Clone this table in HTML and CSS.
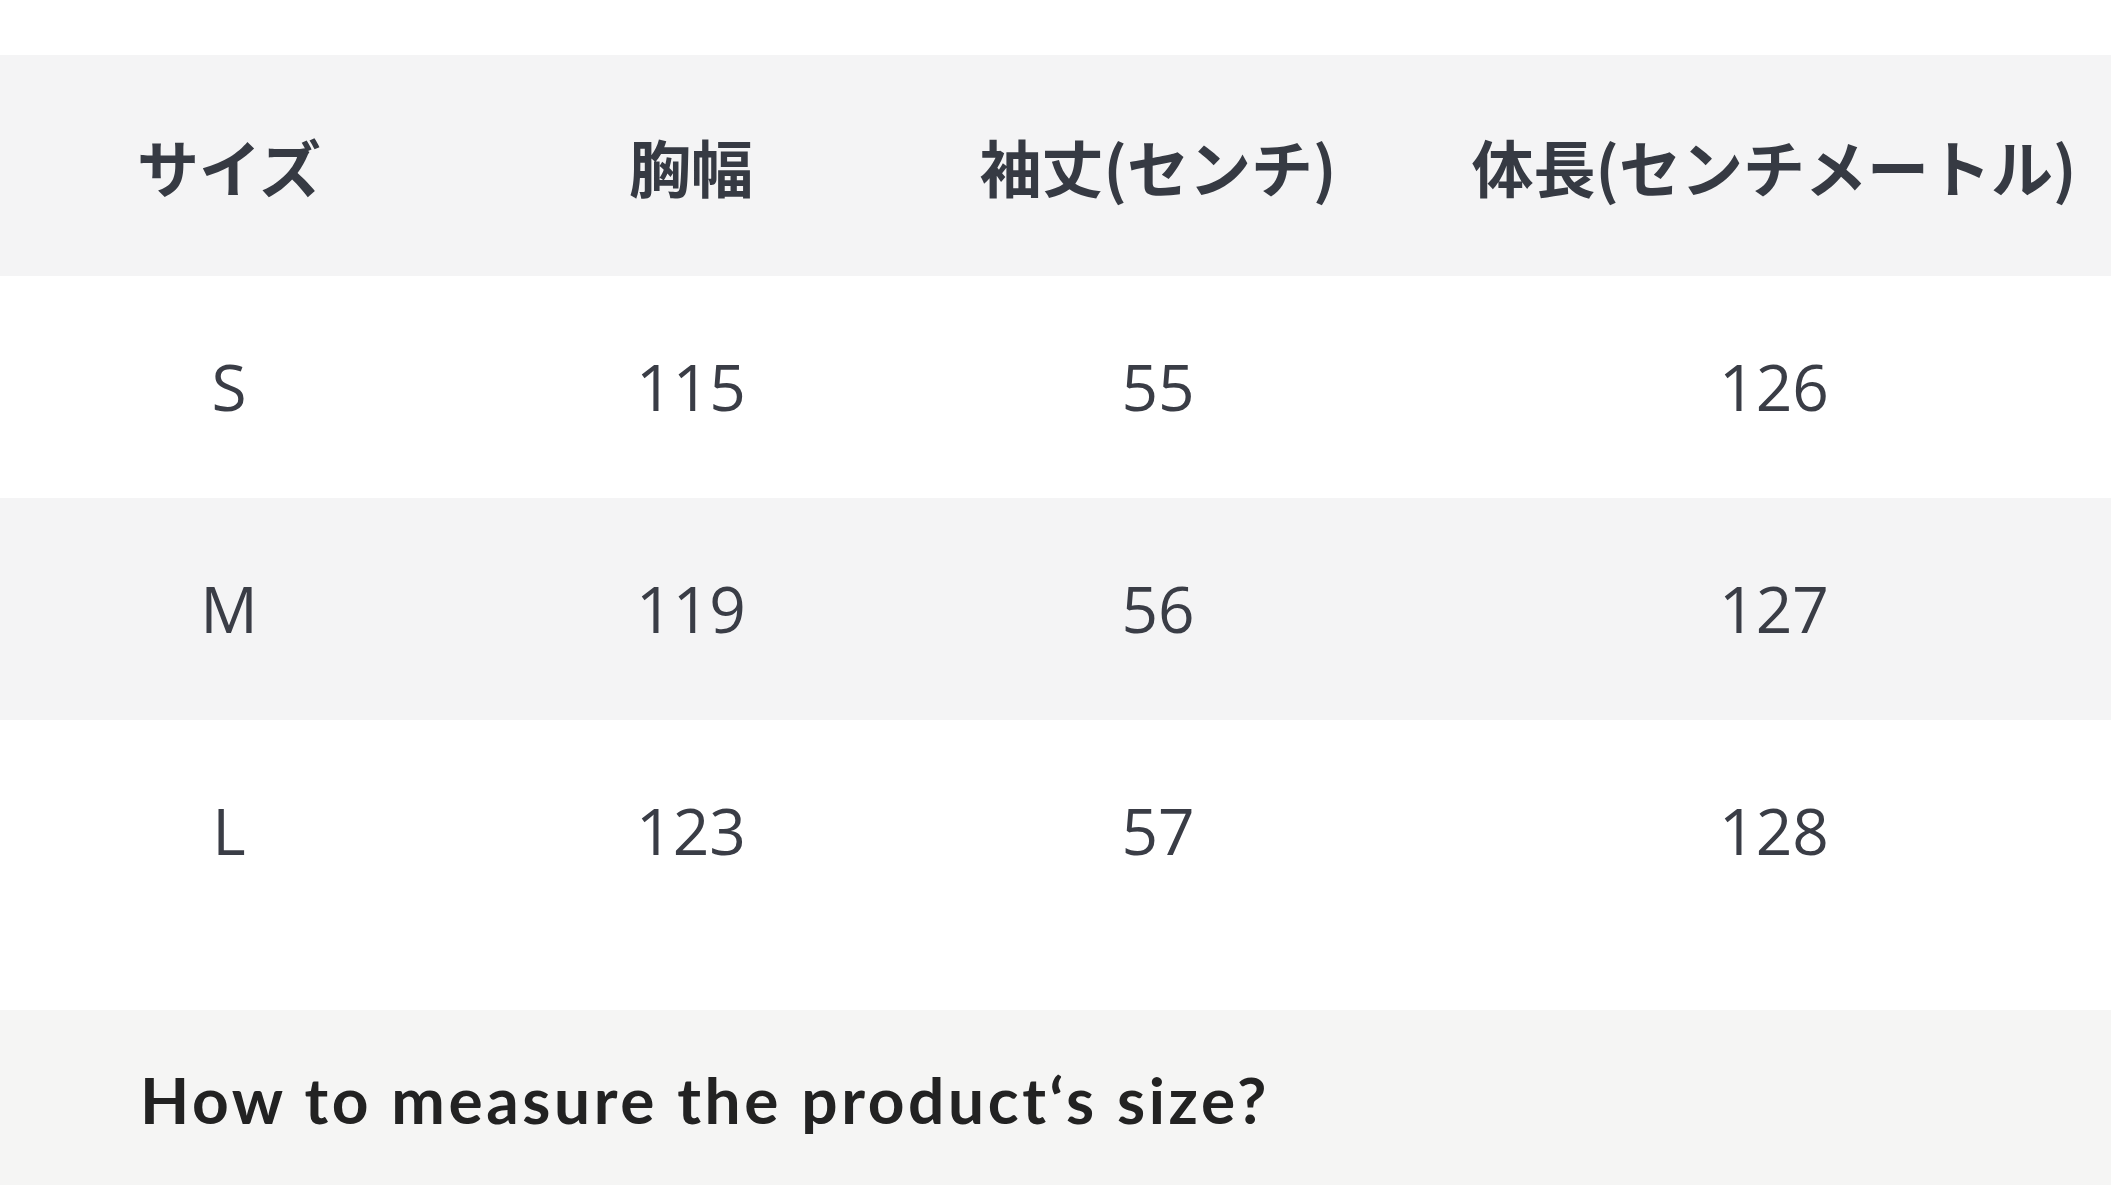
FILE: index.html
```html
<!DOCTYPE html>
<html lang="ja">
<head>
<meta charset="utf-8">
<title>サイズ表</title>
<link rel="stylesheet" href="styles.css">
</head>
<body>
<div class="page">
  <div class="size-table">
    <div class="row head">
      <div class="cell">サイズ</div>
      <div class="cell">胸幅</div>
      <div class="cell">袖丈(センチ)</div>
      <div class="cell">体長(センチメートル)</div>
    </div>
    <div class="row">
      <div class="cell">S</div>
      <div class="cell">115</div>
      <div class="cell">55</div>
      <div class="cell">126</div>
    </div>
    <div class="row alt">
      <div class="cell">M</div>
      <div class="cell">119</div>
      <div class="cell">56</div>
      <div class="cell">127</div>
    </div>
    <div class="row">
      <div class="cell">L</div>
      <div class="cell">123</div>
      <div class="cell">57</div>
      <div class="cell">128</div>
    </div>
  </div>
  <div class="measure">
    <h2 class="measure-title">How to measure the product‘s size?</h2>
  </div>
</div>
</body>
</html>
```

FILE: styles.css
```css
html, body {
  margin: 0;
  padding: 0;
  background: #ffffff;
  overflow: hidden;
}

.page {
  width: 2111px;
  height: 1186px;
  overflow: hidden;
  padding-top: 55px;
  box-sizing: border-box;
}

.size-table {
  width: 2156px;
}

.row {
  display: grid;
  grid-template-columns: 458px 466px 468px 764px;
  height: 222px;
  align-items: center;
  background: #ffffff;
}

.row.head {
  height: 221px;
  background: #f4f4f5;
}

.row.alt {
  background: #f4f4f5;
}

.cell {
  text-align: center;
  font-family: "Open Sans", "Noto Sans", sans-serif;
  font-size: 64px;
  color: #3a3d46;
  line-height: 1;
  white-space: nowrap;
}

.row.head .cell {
  font-family: "Noto Sans CJK JP", "Noto Sans", sans-serif;
  font-weight: 700;
  font-size: 62px;
  color: #363a43;
  letter-spacing: 0;
}

.measure {
  margin-top: 68px;
  background: #f5f5f4;
  height: 175px;
  padding: 52px 0 0 140px;
  box-sizing: border-box;
}

.measure-title {
  margin: 0;
  font-family: "Lato", "Liberation Sans", sans-serif;
  font-weight: 700;
  font-size: 64px;
  line-height: 1.2;
  letter-spacing: 3.6px;
  color: #222222;
}
```
